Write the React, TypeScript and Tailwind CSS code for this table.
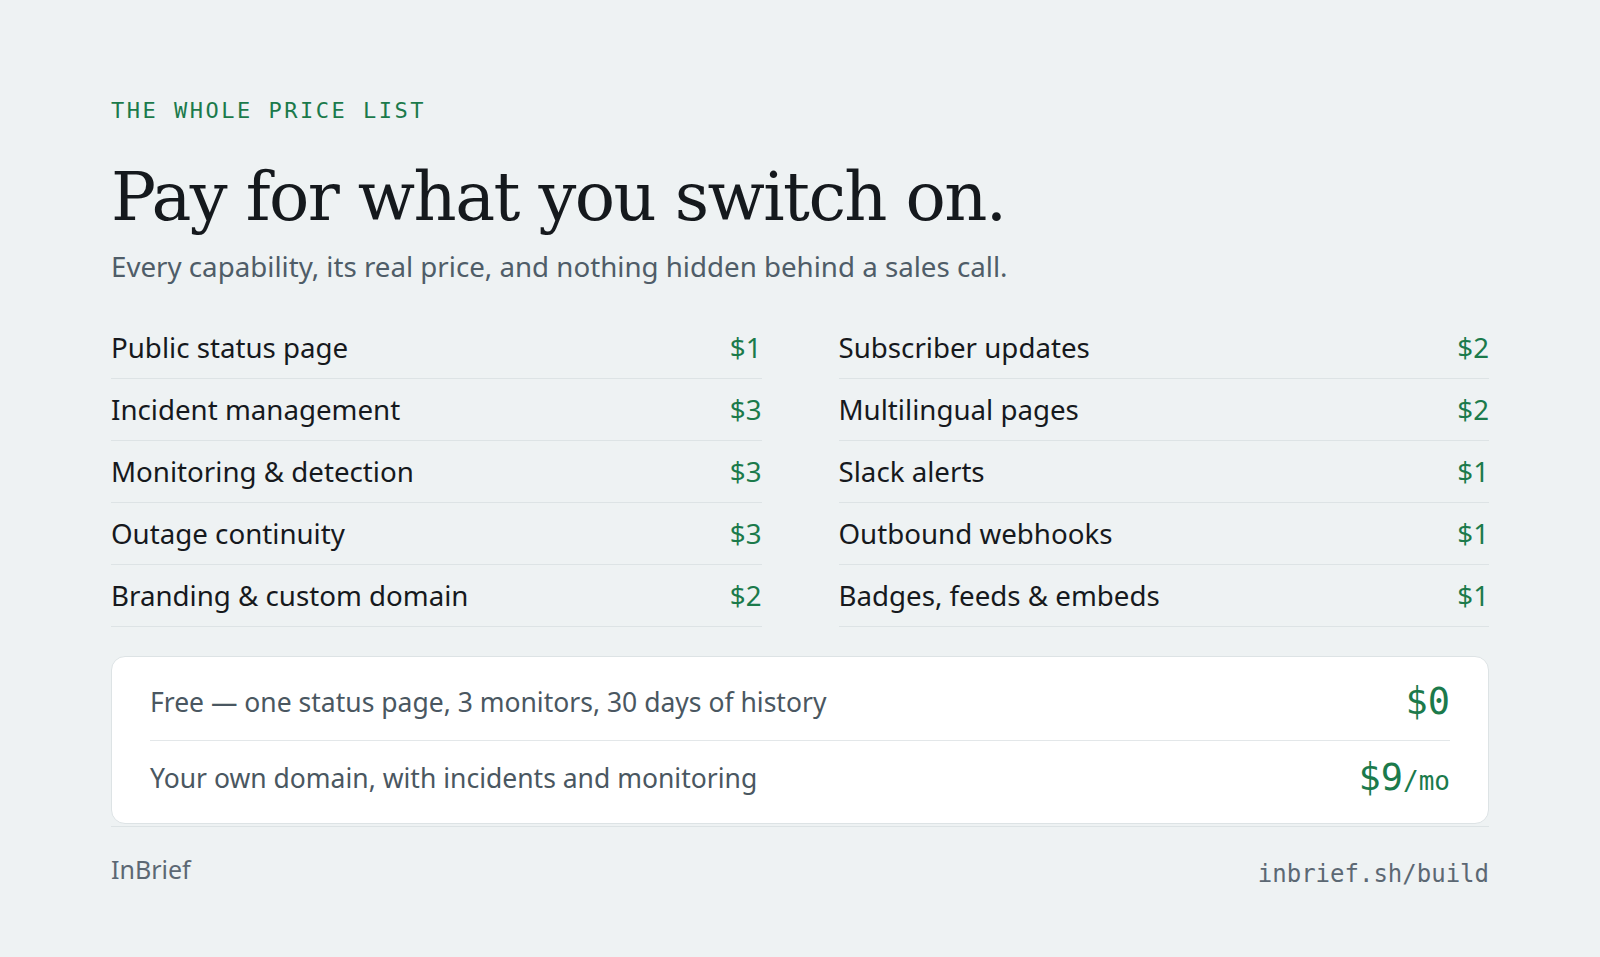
import React from "react"

const left = [
  { name: "Public status page", price: "$1" },
  { name: "Incident management", price: "$3" },
  { name: "Monitoring & detection", price: "$3" },
  { name: "Outage continuity", price: "$3" },
  { name: "Branding & custom domain", price: "$2" },
]

const right = [
  { name: "Subscriber updates", price: "$2" },
  { name: "Multilingual pages", price: "$2" },
  { name: "Slack alerts", price: "$1" },
  { name: "Outbound webhooks", price: "$1" },
  { name: "Badges, feeds & embeds", price: "$1" },
]

const sans = "font-['Noto_Sans',sans-serif]"
const mono = "font-['DejaVu_Sans_Mono',monospace]"

function PriceColumn({ items }: { items: { name: string; price: string }[] }) {
  return (
    <div className="flex flex-col">
      {items.map((item) => (
        <div
          key={item.name}
          className="flex items-center justify-between border-b border-[#dde3e5] py-[14px] text-[27.7px] leading-[33px]"
        >
          <span className="text-[#16191d]">{item.name}</span>
          <span className="text-[#1b7a4b]">{item.price}</span>
        </div>
      ))}
    </div>
  )
}

export default function App() {
  return (
    <div className={`min-h-screen bg-[#eef2f3] px-[111px] pt-[97px] ${sans}`}>
      {/* eyebrow */}
      <div className={`${mono} text-[22px] leading-[28px] tracking-[2.5px] text-[#1b7a4b]`}>
        THE WHOLE PRICE LIST
      </div>

      <h1 className="mt-[32px] font-['DejaVu_Serif',serif] text-[67px] leading-[80px] tracking-[-1.6px] text-[#15191d]">
        Pay for what you switch on.
      </h1>
      <p className="mt-[11px] text-[27.7px] leading-[36px] text-[#4f5d68]">
        Every capability, its real price, and nothing hidden behind a sales call.
      </p>

      <div className="mt-[33px] grid grid-cols-2 gap-x-[77px]">
        <PriceColumn items={left} />
        <PriceColumn items={right} />
      </div>

      {/* plans */}
      <div className="mt-[29px] rounded-[14px] border border-[#dde3e5] bg-white px-[38px]">
        <div className="flex items-center justify-between border-b border-[#e3e7e9] pt-[27px] pb-[20px]">
          <span className="text-[26.5px] leading-[36px] text-[#4a5761]">
            Free — one status page, 3 monitors, 30 days of history
          </span>
          <span className={`${mono} text-[37px] leading-[36px] text-[#1b7a4b]`}>$0</span>
        </div>
        <div className="flex h-[82px] items-start justify-between pt-[19px]">
          <span className="text-[26.5px] leading-[36px] text-[#4a5761]">
            Your own domain, with incidents and monitoring
          </span>
          <span className={`${mono} text-[37px] leading-[36px] text-[#1b7a4b]`}>
            $9<span className="text-[26px]">/mo</span>
          </span>
        </div>
      </div>

      <div className="mt-[2px] flex justify-between border-t border-[#dde3e5] pt-[26px]">
        <span className="text-[25px] leading-[32px] text-[#5c6873]">InBrief</span>
        <span className={`${mono} pt-[5px] text-[24px] leading-[32px] text-[#5c6873]`}>inbrief.sh/build</span>
      </div>
    </div>
  )
}
